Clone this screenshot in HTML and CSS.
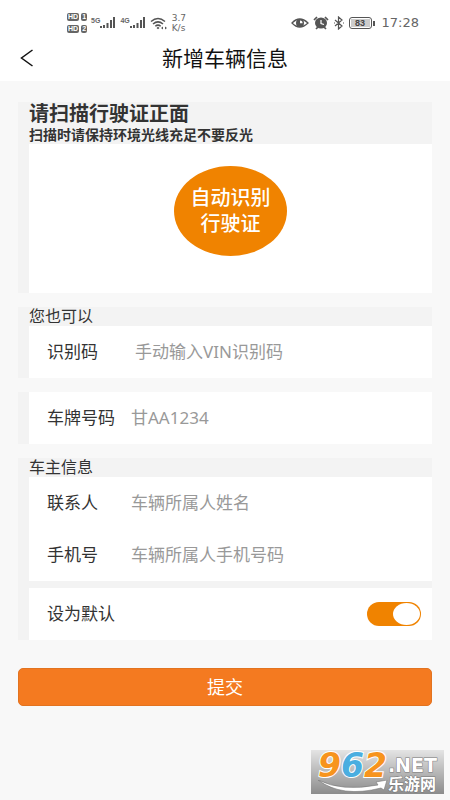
FILE: index.html
```html
<!DOCTYPE html>
<html lang="zh-CN">
<head>
<meta charset="utf-8">
<meta name="viewport" content="width=device-width, initial-scale=1">
<title>新增车辆信息</title>
<link rel="stylesheet" href="styles.css">
</head>
<body>
<header class="top">
  <div class="status">
    <div class="status-group">
      <div class="hd-list">
        <span class="hd"><b>HD</b><b>1</b></span>
        <span class="hd"><b>HD</b><b>2</b></span>
      </div>
      <div class="cell">
        <span class="net">5G</span>
        <svg width="16" height="12" viewBox="0 0 16 12"><path d="M0 9h2v2H0zM3 8h2v3H3zM6.500 6h2v5h-2zM10 3h2v8h-2zM13 0h2v11h-2z"/></svg>
      </div>
      <div class="cell">
        <span class="net">4G</span>
        <svg width="16" height="12" viewBox="0 0 16 12"><path d="M0 9h2v2H0zM3 8h2v3H3zM6.500 6h2v5h-2zM10 3h2v8h-2zM13 0h2v11h-2z"/></svg>
      </div>
      <svg width="18" height="13" viewBox="0 0 18 13"><g fill="none" stroke="#555" stroke-width="1.500"><path d="M1 4.500Q8 -1.500 15 4.500M3 7Q8 2.800 13 7M5.300 9.300Q8 7 10.700 9.300"/></g><path d="M6.500 11L8 9.800L9.500 11L8 12.300zM11 11l2-1.500v3zM17 11l-2-1.500v3z"/></svg>
      <div class="speed"><span>3.7</span><span>K/s</span></div>
    </div>
    <div class="status-group">
      <svg width="18" height="12" viewBox="0 0 18 12"><path d="M1 6Q8.500 -2 17 6Q8.500 14 1 6z" fill="none" stroke="#555" stroke-width="1.300"/><circle cx="9" cy="6" r="4"/><path d="M9 3.500v2.700h2.500A2.500 2.500 0 0 0 9 3.500z" fill="#fff"/></svg>
      <svg width="16" height="14" viewBox="0 0 16 14"><ellipse cx="8" cy="7" rx="6" ry="5.500"/><path d="M1 4L4 1M15 4L12 1M3 13l2-2M13 13l-2-2" stroke="#555" stroke-width="1.700"/><path d="M8 4v3.500l3 1" fill="none" stroke="#fff" stroke-width="1.200"/></svg>
      <svg width="12" height="14" viewBox="0 0 12 14"><path d="M2 4l7 6-3.500 3V1L9 4l-7 6M1 7h1M10 7h1" fill="none" stroke="#555" stroke-width="1.200"/></svg>
      <div class="battery"><span>83</span></div>
      <time class="clock">17:28</time>
    </div>
  </div>
  <nav class="nav">
    <button class="back" type="button" aria-label="返回">
      <svg width="14" height="18" viewBox="0 0 14 18"><path d="M12.500 1L1.500 9L12.500 17" fill="none" stroke="#111" stroke-width="1.500"/></svg>
    </button>
    <h1 class="title">新增车辆信息</h1>
  </nav>
</header>
<form class="content">
  <section class="group">
    <div class="scan-head">
      <h2>请扫描行驶证正面</h2>
      <p>扫描时请保持环境光线充足不要反光</p>
    </div>
    <div class="scan-body">
      <button class="scan" type="button">自动识别<br>行驶证</button>
    </div>
  </section>
  <section class="group">
    <h3 class="caption">您也可以</h3>
    <div class="row vin"><label for="vin">识别码</label><input id="vin" type="text" placeholder="手动输入VIN识别码"></div>
  </section>
  <section class="group">
    <div class="row"><label for="plate">车牌号码</label><input id="plate" type="text" placeholder="甘AA1234"></div>
  </section>
  <section class="group">
    <h3 class="caption">车主信息</h3>
    <div class="row"><label for="owner">联系人</label><input id="owner" type="text" placeholder="车辆所属人姓名"></div>
    <div class="row"><label for="phone">手机号</label><input id="phone" type="tel" placeholder="车辆所属人手机号码"></div>
    <div class="row default"><label for="default">设为默认</label><input class="switch" id="default" type="checkbox" role="switch" checked></div>
  </section>
  <button class="submit" type="submit">提交</button>
</form>
<aside class="mark">
  <div class="digits"><span>9</span><span class="blue">6</span><span>2</span></div>
  <div class="site"><span class="net-name">.NET</span><span class="cn-name">乐游网</span></div>
  <svg class="swoosh" width="70" height="14" viewBox="0 0 70 14"><path d="M0 0Q24 12 60 5L58 2L69 0L66 10L63 8Q24 18 0 0z" fill="#fff" stroke="#777" stroke-width=".6"/></svg>
</aside>
</body>
</html>
```

FILE: styles.css
```css
* {
  box-sizing: border-box;
}

body {
  margin: 0;
  min-height: 100vh;
  position: relative;
  background: #f8f8f8;
  color: #333;
  font-family: "Noto Sans", "Noto Sans CJK SC", sans-serif;
}

h1, h2, h3, p {
  margin: 0;
}

button, input {
  font-family: inherit;
}

.top {
  background: #fff;
  padding-bottom: 3px;
}

.status {
  display: flex;
  justify-content: space-between;
  align-items: center;
  height: 38px;
  padding: 8px 31px 0 67px;
  color: #666;
}

.status svg {
  fill: #555;
}

.status-group {
  display: flex;
  align-items: center;
  gap: 4px;
}

.hd-list {
  display: flex;
  flex-direction: column;
  gap: 4px;
}

.hd {
  display: flex;
  gap: 2px;
}

.hd b {
  padding: 0 1px;
  border-radius: 2px;
  background: #666;
  color: #fff;
  font: bold 7px/8px "Liberation Sans", sans-serif;
}

.cell {
  display: flex;
  align-items: flex-start;
}

.net {
  font: bold 7px/7px "Liberation Sans", sans-serif;
}

.speed {
  display: flex;
  flex-direction: column;
  font: 9px/10px "DejaVu Sans", sans-serif;
}

.battery {
  position: relative;
  width: 23px;
  height: 12px;
  margin-right: 6px;
  padding: 1px;
  border: 1px solid #555;
  border-radius: 3px;
  text-align: center;
  color: #444;
  font: bold 9px/8px "Liberation Sans", sans-serif;
}

.battery span {
  display: block;
  background: #ccc;
}

.battery::after {
  content: "";
  position: absolute;
  top: 3px;
  right: -4px;
  width: 2px;
  height: 5px;
  background: #555;
}

.clock {
  font: 13px/16px "DejaVu Sans", sans-serif;
}

.nav {
  display: grid;
  grid-template-columns: 54px 1fr 54px;
  align-items: center;
  height: 40px;
}

.back {
  display: flex;
  padding: 3px 20px;
  border: 0;
  background: none;
}

.title {
  color: #111;
  font-size: 21px;
  line-height: 28px;
  font-weight: 400;
  text-align: center;
}

.content {
  display: flex;
  flex-direction: column;
  gap: 14px;
  padding: 21px 18px;
}

.group {
  padding-left: 11px;
  background: #f3f3f3;
}

.scan-head {
  padding-bottom: 1px;
}

.scan-head h2 {
  font-size: 20px;
  line-height: 24px;
}

.scan-head p {
  font-size: 14px;
  line-height: 17px;
  font-weight: 700;
}

.scan-body {
  display: flex;
  justify-content: center;
  padding: 22px 0 37px;
  background: #fff;
}

.scan {
  width: 113px;
  height: 90px;
  padding: 0;
  border: 0;
  border-radius: 50%;
  background: #f08300;
  color: #fff;
  font-size: 20px;
  line-height: 26px;
  font-weight: 500;
}

.caption {
  font-size: 16px;
  line-height: 19px;
  font-weight: 400;
}

.row {
  display: flex;
  align-items: center;
  height: 52px;
  padding: 0 11px 0 18px;
  background: #fff;
}

.row label {
  flex: none;
  width: 84px;
  font-size: 17px;
  line-height: 24px;
}

.row input[type="text"],
.row input[type="tel"] {
  flex: 1;
  min-width: 0;
  padding: 0;
  border: 0;
  outline: 0;
  background: none;
  font-size: 17px;
  line-height: 24px;
}

.row.vin label {
  width: 88px;
}

.row input::placeholder {
  color: #999;
}

.row.default {
  justify-content: space-between;
  margin-top: 7px;
}

.switch {
  appearance: none;
  display: flex;
  justify-content: flex-end;
  width: 54px;
  height: 24px;
  margin: 0;
  padding: 1px;
  border-radius: 12px;
  background: #f08300;
}

.switch::before {
  content: "";
  width: 27px;
  height: 22px;
  border-radius: 50%;
  background: #fff;
}

.switch:not(:checked) {
  justify-content: flex-start;
  background: #ccc;
}

.submit {
  height: 38px;
  margin-top: 14px;
  padding: 0;
  border: 1px solid #e27320;
  border-radius: 5px;
  background: #f47a20;
  color: #fff;
  font-size: 18px;
  line-height: 24px;
}

.mark {
  position: absolute;
  right: 6px;
  bottom: 6px;
  display: flex;
  width: 133px;
  height: 44px;
  padding-left: 7px;
  background: linear-gradient(#e4e4e4, #8c8c8c);
}

.digits {
  color: #f7941d;
  font: italic bold 33px/32px "DejaVu Sans", sans-serif;
  -webkit-text-stroke: 2px #fff;
  paint-order: stroke fill;
}

.digits .blue {
  color: #4aaee0;
}

.site {
  display: flex;
  flex-direction: column;
  margin-left: 1px;
  color: #fff;
  -webkit-text-stroke: 1px #777;
  paint-order: stroke fill;
}

.net-name {
  padding-top: 5px;
  font: bold 19px/20px "DejaVu Sans", sans-serif;
}

.cn-name {
  font-size: 16px;
  line-height: 18px;
  font-weight: 700;
}

.swoosh {
  position: absolute;
  left: 7px;
  bottom: 0;
}
```
